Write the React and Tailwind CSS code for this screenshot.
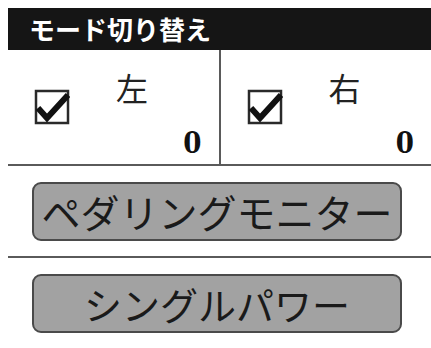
const jp = { fontFamily: '"Noto Sans CJK JP", "Noto Sans", sans-serif' };

const Check = () => (
  <svg width="36" height="36" viewBox="0 0 36 36" className="shrink-0">
    <rect x="2" y="2" width="32" height="32" fill="white" stroke="#2a2a2a" strokeWidth="2.5" />
    <path d="M4 19 L13 29 L34 6" fill="none" stroke="#111" strokeWidth="6" strokeLinejoin="miter" strokeLinecap="butt" />
  </svg>
);

const Side = ({ label, border }) => (
  <div className={`flex-1 flex flex-col h-[114px] ${border ? "border-r-2 border-[#5a5a5a]" : ""}`}>
    <div className="flex pl-[26px]">
      <div className="mt-[39px]">
        <Check />
      </div>
      <div className="ml-[46px] mt-[21px] text-[32px] leading-[32px] text-[#222]" style={jp}>
        {label}
      </div>
    </div>
    <div
      className="self-end mr-[17px] mt-[4px] text-[29px] leading-[29px] font-bold text-[#111]"
      style={{ fontFamily: '"DejaVu Serif Condensed", "DejaVu Serif", serif', fontStretch: "condensed" }}
    >
      0
    </div>
  </div>
);

const Btn = ({ children, size }) => (
  <div className="h-[90px] flex items-center pl-[24px]">
    <div
      className={`w-[370px] h-[59px] rounded-[9px] border-2 border-[#4a4a4a] bg-[#a2a2a2] flex items-center justify-center text-[#1a1a1a] ${size}`}
      style={jp}
    >
      {children}
    </div>
  </div>
);

export default function App() {
  return (
    <div className="w-[431px] h-[348px] bg-white pt-[8px] pl-[8px] overflow-hidden">
      <div
        className="h-[42px] bg-[#151515] text-white font-bold text-[26px] leading-[42px] pl-[21px]"
        style={jp}
      >
        モード切り替え
      </div>
      <div className="flex border-b-2 border-[#5a5a5a]">
        <Side label="左" border />
        <Side label="右" />
      </div>
      <Btn size="text-[39px]">ペダリングモニター</Btn>
      <div className="h-[2px] bg-[#5a5a5a]" />
      <Btn size="text-[38px]">シングルパワー</Btn>
      <div className="h-[3px] bg-[#333]" />
    </div>
  );
}
